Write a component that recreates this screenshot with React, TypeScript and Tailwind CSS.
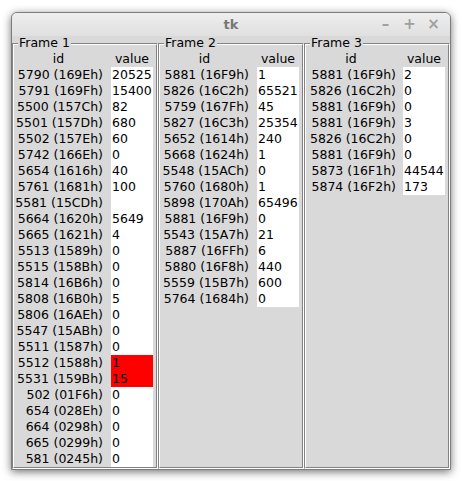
import React from "react";

type Row = [string, string, boolean?];

const f1: Row[] = [
  ["5790 (169Eh)", "20525"],
  ["5791 (169Fh)", "15400"],
  ["5500 (157Ch)", "82"],
  ["5501 (157Dh)", "680"],
  ["5502 (157Eh)", "60"],
  ["5742 (166Eh)", "0"],
  ["5654 (1616h)", "40"],
  ["5761 (1681h)", "100"],
  ["5581 (15CDh)", ""],
  ["5664 (1620h)", "5649"],
  ["5665 (1621h)", "4"],
  ["5513 (1589h)", "0"],
  ["5515 (158Bh)", "0"],
  ["5814 (16B6h)", "0"],
  ["5808 (16B0h)", "5"],
  ["5806 (16AEh)", "0"],
  ["5547 (15ABh)", "0"],
  ["5511 (1587h)", "0"],
  ["5512 (1588h)", "1", true],
  ["5531 (159Bh)", "15", true],
  ["502 (01F6h)", "0"],
  ["654 (028Eh)", "0"],
  ["664 (0298h)", "0"],
  ["665 (0299h)", "0"],
  ["581 (0245h)", "0"],
];

const f2: Row[] = [
  ["5881 (16F9h)", "1"],
  ["5826 (16C2h)", "65521"],
  ["5759 (167Fh)", "45"],
  ["5827 (16C3h)", "25354"],
  ["5652 (1614h)", "240"],
  ["5668 (1624h)", "1"],
  ["5548 (15ACh)", "0"],
  ["5760 (1680h)", "1"],
  ["5898 (170Ah)", "65496"],
  ["5881 (16F9h)", "0"],
  ["5543 (15A7h)", "21"],
  ["5887 (16FFh)", "6"],
  ["5880 (16F8h)", "440"],
  ["5559 (15B7h)", "600"],
  ["5764 (1684h)", "0"],
];

const f3: Row[] = [
  ["5881 (16F9h)", "2"],
  ["5826 (16C2h)", "0"],
  ["5881 (16F9h)", "0"],
  ["5881 (16F9h)", "3"],
  ["5826 (16C2h)", "0"],
  ["5881 (16F9h)", "0"],
  ["5873 (16F1h)", "44544"],
  ["5874 (16F2h)", "173"],
];

function Frame({
  title,
  rows,
  idClass,
  valClass,
}: {
  title: string;
  rows: Row[];
  idClass: string;
  valClass: string;
}) {
  return (
    <div className="relative flex w-[146px] shrink-0 flex-col pt-[7px]">
      <div className="flex flex-1 flex-col border border-t-[#828282] border-l-[#828282] border-r-white border-b-white">
        <div className="flex flex-1 flex-col border border-t-white border-l-white border-r-[#828282] border-b-[#828282] pt-[6px]">
          <div className="flex h-[16px] items-center leading-[16px]">
            <div className={`${idClass} shrink-0 text-center`}>id</div>
            <div className={`${valClass} shrink-0 text-center`}>value</div>
          </div>
          {rows.map(([id, v, red], i) => (
            <div key={i} className="flex h-[16px] leading-[16px]">
              <div className={`${idClass} flex shrink-0 justify-end whitespace-nowrap`}>
                {id}
              </div>
              <div
                className={`${valClass} h-[16px] shrink-0 pl-[1px] whitespace-nowrap ${
                  red ? "bg-[#ff0000]" : "bg-white"
                }`}
              >
                {v === "" ? "\u00a0" : v}
              </div>
            </div>
          ))}
        </div>
      </div>
      <div className="absolute left-[6px] top-0 bg-[#d9d9d9] px-[1px] leading-[14px]">
        {title}
      </div>
    </div>
  );
}

export default function App() {
  return (
    <div
      className="h-[481px] w-[462px] bg-white pl-[11px] pt-[12px] text-[12.5px] text-black"
      style={{ fontFamily: '"DejaVu Sans", sans-serif' }}
    >
      <div className="flex h-[458px] w-[440px] flex-col overflow-hidden rounded-t-[6px] border border-[#7c7c7c] bg-[#d9d9d9] shadow-[0_2px_9px_rgba(0,0,0,0.55)]">
        <div className="relative flex h-[23px] items-center justify-center bg-gradient-to-b from-[#eeeeee] to-[#e0e0e0]">
          <span className="text-[13px] font-bold text-[#777777]">tk</span>
          <div className="absolute right-[9px] top-0 flex h-full items-center gap-[9px] text-[15px] font-bold text-[#a0a0a0]">
            <span className="w-[15px] text-center">–</span>
            <span className="w-[15px] text-center">+</span>
            <span className="w-[15px] text-center">×</span>
          </div>
        </div>
        <div className="flex flex-1">
          <Frame
            title="Frame 1"
            rows={f1}
            idClass="w-[90px] pr-[1px]"
            valClass="ml-[7px] w-[42px]"
          />
          <Frame
            title="Frame 2"
            rows={f2}
            idClass="w-[92px] pr-[3px]"
            valClass="ml-[5px] w-[42px]"
          />
          <Frame
            title="Frame 3"
            rows={f3}
            idClass="w-[92px] pr-[2px]"
            valClass="ml-[5px] w-[42px]"
          />
        </div>
      </div>
    </div>
  );
}
